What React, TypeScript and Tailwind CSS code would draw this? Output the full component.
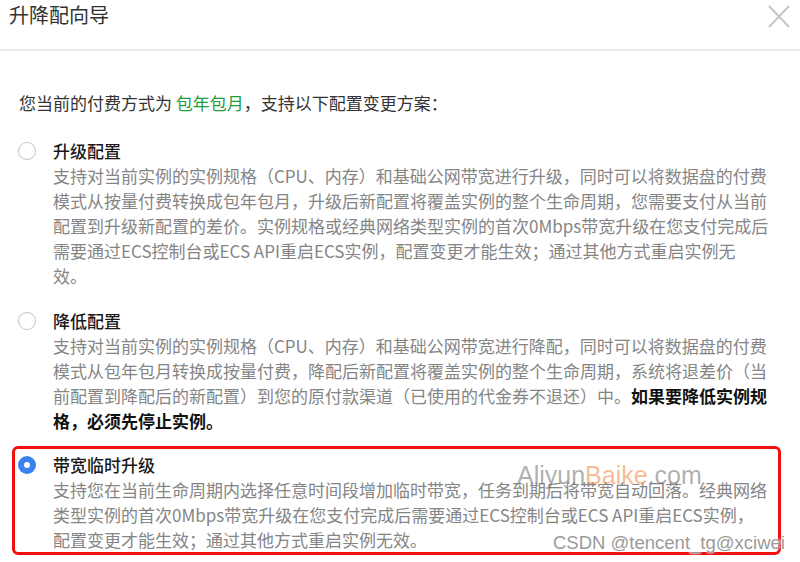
import React from "react";

const Radio = ({ checked }: { checked?: boolean }) =>
  checked ? (
    <div className="mt-[3.5px] flex h-[18px] w-[18px] shrink-0 items-center justify-center rounded-full bg-[#3b82f0]">
      <div className="h-[6px] w-[6px] rounded-full bg-white" />
    </div>
  ) : (
    <div className="mt-[3.5px] h-[18px] w-[18px] shrink-0 rounded-full border border-[#c4c4c4] bg-white" />
  );

export default function App() {
  return (
    <div className="relative h-[562px] w-[800px] overflow-hidden bg-white font-['Noto_Sans_CJK_SC','Noto_Sans',sans-serif] text-[17px] leading-[25px]">
      {/* header */}
      <div className="flex h-[51px] items-start justify-between border-b-2 border-[#e9e9e9] pl-[9px] pr-[10px]">
        <div className="mt-[3px] text-[20px] leading-[24px] text-[#333]">升降配向导</div>
        <svg className="mt-[5px]" width="22" height="23" viewBox="0 0 22 23">
          <path d="M1 1 L21 22 M21 1 L1 22" stroke="#c6c6c6" strokeWidth="2" fill="none" />
        </svg>
      </div>

      {/* intro */}
      <div className="mt-[39px] pl-[19px] text-[#333]">
        您当前的付费方式为 <span className="text-[#1f9d38]">包年包月</span>，支持以下配置变更方案：
      </div>

      <div className="flex flex-col pl-[12px] pr-[19px]">
        {/* option 1 */}
        <div className="mt-[20px] flex gap-[17px] rounded-[6px] border-[3px] border-transparent pl-[3px]">
          <Radio />
          <div className="whitespace-nowrap">
            <div className="font-medium text-[#1a1a1a]">升级配置</div>
            <div className="text-[#858585]">
              支持对当前实例的实例规格（CPU、内存）和基础公网带宽进行升级，同时可以将数据盘的付费
              <br />
              模式从按量付费转换成包年包月，升级后新配置将覆盖实例的整个生命周期，您需要支付从当前
              <br />
              配置到升级新配置的差价。实例规格或经典网络类型实例的首次0Mbps带宽升级在您支付完成后
              <br />
              需要通过ECS控制台或ECS API重启ECS实例，配置变更才能生效；通过其他方式重启实例无
              <br />
              效。
            </div>
          </div>
        </div>

        {/* option 2 */}
        <div className="mt-[14px] flex gap-[17px] rounded-[6px] border-[3px] border-transparent pl-[3px]">
          <Radio />
          <div className="whitespace-nowrap">
            <div className="font-medium text-[#1a1a1a]">降低配置</div>
            <div className="text-[#858585]">
              支持对当前实例的实例规格（CPU、内存）和基础公网带宽进行降配，同时可以将数据盘的付费
              <br />
              模式从包年包月转换成按量付费，降配后新配置将覆盖实例的整个生命周期，系统将退差价（当
              <br />
              前配置到降配后的新配置）到您的原付款渠道（已使用的代金券不退还）中。
              <span className="font-bold text-[#111]">如果要降低实例规</span>
              <br />
              <span className="font-bold text-[#111]">格，必须先停止实例。</span>
            </div>
          </div>
        </div>

        {/* option 3 */}
        <div className="mt-[10px] flex gap-[17px] rounded-[6px] border-[3px] border-[#f01010] pl-[3px] pt-[3px]">
          <Radio checked />
          <div className="whitespace-nowrap">
            <div className="font-medium text-[#1a1a1a]">带宽临时升级</div>
            <div className="text-[#858585]">
              支持您在当前生命周期内选择任意时间段增加临时带宽，任务到期后将带宽自动回落。经典网络
              <br />
              类型实例的首次0Mbps带宽升级在您支付完成后需要通过ECS控制台或ECS API重启ECS实例，
              <br />
              配置变更才能生效；通过其他方式重启实例无效。
            </div>
          </div>
        </div>
      </div>

      {/* watermarks */}
      <div className="absolute left-[517px] top-[463px] font-['Liberation_Sans',Arial,sans-serif] text-[25px] leading-none text-[rgba(95,95,95,0.5)]">
        Aliyun<span className="text-[rgba(240,130,60,0.55)]">Baike</span>.com
      </div>
      <div className="absolute left-[553px] top-[534px] font-['Liberation_Sans',Arial,sans-serif] text-[18.5px] leading-none text-[#9a9a9a] [text-shadow:0_0_2px_#fff,0_0_2px_#fff]">
        CSDN @tencent_tg@xciwei
      </div>
    </div>
  );
}
